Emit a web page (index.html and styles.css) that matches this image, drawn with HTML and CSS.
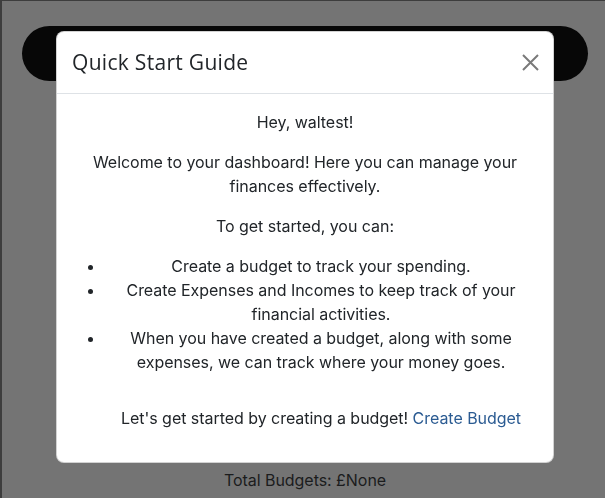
FILE: index.html
```html
<!DOCTYPE html>
<html lang="en">
<head>
<meta charset="utf-8">
<title>Dashboard</title>
<link rel="stylesheet" href="styles.css">
</head>
<body>
<div class="page">
  <header class="topbar"></header>
  <div class="spacer"></div>
  <p class="total">Total Budgets: £None</p>
</div>

<div class="backdrop">
  <div class="modal">
    <div class="modal-header">
      <h5 class="modal-title">Quick Start Guide</h5>
      <button class="btn-close" aria-label="Close">
        <svg width="17" height="17" viewBox="0 0 17 17" aria-hidden="true">
          <path d="M1 1L16 16M16 1L1 16" stroke="#7a7a7a" stroke-width="2" fill="none"/>
        </svg>
      </button>
    </div>
    <div class="modal-body">
      <p>Hey, waltest!</p>
      <p>Welcome to your dashboard! Here you can manage your finances effectively.</p>
      <p>To get started, you can:</p>
      <ul class="steps">
        <li>Create a budget to track your spending.</li>
        <li>Create Expenses and Incomes to keep track of your financial activities.</li>
        <li>When you have created a budget, along with some expenses, we can track where your money goes.</li>
      </ul>
      <p class="cta">Let's get started by creating a budget! <a href="#" class="link">Create Budget</a></p>
    </div>
  </div>
</div>
</body>
</html>
```

FILE: styles.css
```css
* { box-sizing: border-box; }

html, body {
  margin: 0;
  height: 100%;
}

body {
  background: #747474;
  font-family: Inter, "Liberation Sans", sans-serif;
  font-size: 16px;
  line-height: 24px;
  color: #212529;
  overflow: hidden;
  letter-spacing: -0.04px;
}

.page {
  height: 498px;
  border-top: 1px solid #3d3d3d;
  border-left: 2px solid #3d3d3d;
  display: flex;
  flex-direction: column;
  padding: 25px 17px 0 20px;
}

.topbar {
  height: 55px;
  background: #070707;
  border-radius: 28px;
}

.spacer { flex: 1; }

.total {
  margin: 0 0 6px;
  text-align: center;
  color: #1b1c1d;
}

.backdrop {
  position: fixed;
  inset: 0;
  display: flex;
  justify-content: center;
  align-items: flex-start;
  padding: 31px 0 0 5px;
}

.modal {
  width: 498px;
  background: #fff;
  border: 1px solid rgba(0, 0, 0, 0.175);
  border-radius: 8px;
}

.modal-header {
  display: flex;
  align-items: center;
  padding: 16px 15px;
  border-bottom: 1px solid #dee2e6;
}

.modal-title {
  margin: 0;
  font-family: "Open Sans", "Liberation Sans", sans-serif;
  font-weight: 400;
  font-size: 21px;
  line-height: 29px;
  color: #212529;
  letter-spacing: 0.3px;
}

.btn-close {
  margin-left: auto;
  margin-right: -1px;
  padding: 0;
  border: 0;
  background: none;
  width: 17px;
  height: 17px;
  display: flex;
}

.modal-body {
  padding: 16px;
  text-align: center;
}

.modal-body p {
  margin: 0 0 16px;
}

.steps {
  margin: 0 0 16px;
  padding-left: 32px;
}

.cta {
  padding-left: 32px;
  margin-top: 32px !important;
}

.link {
  color: #2b5b92;
  text-decoration: none;
}
```
